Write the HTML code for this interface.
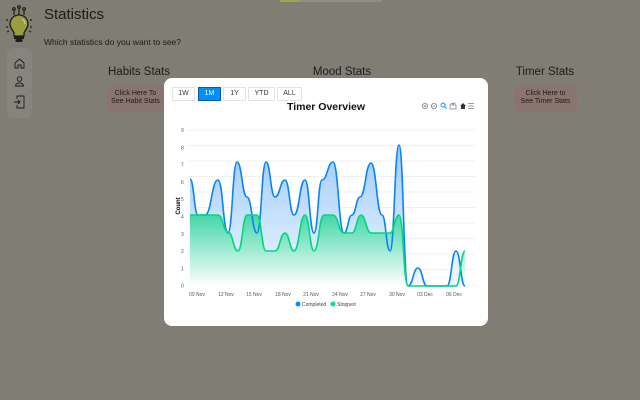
<!DOCTYPE html>
<html><head><meta charset="utf-8"><style>
*{margin:0;padding:0;box-sizing:border-box}
body{width:640px;height:400px;overflow:hidden;background:#7f7d74;font-family:"Liberation Sans",sans-serif;position:relative;color:#1c1c18}
.abs{position:absolute}
.h1{left:44px;top:6px;font-size:15px}
.q{left:44px;top:37px;font-size:8.5px}
.st{font-size:11.5px;text-align:center;width:120px}
.btn{background:#8a7470;border-radius:6px;font-size:7px;text-align:center;line-height:8px;padding-top:5px;color:#1c1c18}
.side{left:7px;top:48px;width:25px;height:70px;background:#86847c;border-radius:6px}
.modal{left:164px;top:78px;width:324px;height:248px;background:#fff;border-radius:8px}
.rb{top:9px;height:14px;border:1px solid #e3e3e3;background:#fff;font-size:7px;text-align:center;line-height:12px;color:#333}
</style></head><body>
<div class="abs" style="left:280px;top:0;width:20px;height:2px;background:#95a84a"></div>
<div class="abs" style="left:300px;top:0;width:82px;height:2px;background:#8f8e86"></div>
<svg class="abs" style="left:4px;top:3px" width="30" height="42" viewBox="0 0 30 42">
<g stroke="#1c1c18" stroke-width="1.2" fill="none"><path d="M10 12V7M15 12V5M20 12V7"/><circle cx="10" cy="6" r="1.3"/><circle cx="15" cy="4" r="1.3"/><circle cx="20" cy="6" r="1.3"/>
<path d="M2 17h2M2 24h2M26 17h2M26 24h2M3 29l2-1M27 29l-2-1"/></g>
<path d="M15 12c-6 0-9 5-9 9 0 4 3 6 4 9v3h10v-3c1-3 4-5 4-9 0-4-3-9-9-9z" fill="#9b9c3e" stroke="#1c1c18" stroke-width="1.3"/>
<path d="M18 16c2 1 3 3 3 5" stroke="#c9c98a" stroke-width="1.3" fill="none"/>
<rect x="10" y="33" width="10" height="3" fill="#1c1c18"/><rect x="11.5" y="36" width="7" height="3" rx="1" fill="#1c1c18"/>
</svg>
<div class="abs h1">Statistics</div>
<div class="abs q">Which statistics do you want to see?</div>
<div class="abs side"></div>
<svg class="abs" style="left:7px;top:48px" width="25" height="70" fill="none" stroke="#1c1c18" stroke-width="0.9">
<path d="M8 15l4.5-4 4.5 4v5h-3v-3h-3v3H8z"/>
<circle cx="12.5" cy="31" r="2.3"/><path d="M8.5 38c0-2 2-3 4-3s4 1 4 3z"/>
<path d="M10 51v-3h7v12h-7v-3M7 54h6M11 52l2 2-2 2"/>
</svg>
<div class="abs st" style="left:79px;top:66px">Habits Stats</div>
<div class="abs btn" style="left:107px;top:85px;width:57px;height:27px">Click Here To<br>See Habit Stats</div>
<div class="abs st" style="left:282px;top:66px">Mood Stats</div>
<div class="abs st" style="left:485px;top:66px">Timer Stats</div>
<div class="abs btn" style="left:514px;top:85px;width:63px;height:27px">Click Here to<br>See Timer Stats</div>
<div class="abs modal">
<div class="abs rb" style="left:8px;width:23px">1W</div>
<div class="abs rb" style="left:34px;width:23px;background:#008ffb;border-color:#0b5ca8;color:#fff">1M</div>
<div class="abs rb" style="left:59px;width:23px">1Y</div>
<div class="abs rb" style="left:84px;width:27px">YTD</div>
<div class="abs rb" style="left:113px;width:25px">ALL</div>
<div class="abs" style="left:0;width:324px;top:23px;text-align:center;font-size:10.5px;font-weight:bold;color:#111">Timer Overview</div>
</div>
<svg class="abs" style="left:0;top:0" width="640" height="400">
<defs>
<linearGradient id="gb" x1="0" y1="0" x2="0" y2="1"><stop offset="0" stop-color="#8cc2f7"/><stop offset="1" stop-color="#eef6fe"/></linearGradient>
<linearGradient id="gg" x1="0" y1="0" x2="0" y2="1"><stop offset="0" stop-color="#3dd6a3"/><stop offset="1" stop-color="#ffffff"/></linearGradient>
</defs>
<g id="grid" stroke="#ececec" stroke-width="0.8"></g>
<g font-size="5" fill="#555" id="yl"></g>
<path id="fb" fill="url(#gb)" fill-opacity="0.85"/>
<path id="fg" fill="url(#gg)" fill-opacity="0.95"/>
<path id="lb" fill="none" stroke="#0a84f5" stroke-width="1.6"/>
<path id="lg" fill="none" stroke="#00d97e" stroke-width="1.6"/>
<g font-size="5" fill="#555" text-anchor="middle">
<text x="197" y="296">09 Nov</text><text x="226" y="296">12 Nov</text><text x="254" y="296">15 Nov</text><text x="283" y="296">18 Nov</text><text x="311" y="296">21 Nov</text><text x="340" y="296">24 Nov</text><text x="368" y="296">27 Nov</text><text x="397" y="296">30 Nov</text><text x="425" y="296">03 Dec</text><text x="454" y="296">06 Dec</text>
</g>
<text x="180" y="206" font-size="6" font-weight="bold" transform="rotate(-90 180 206)" text-anchor="middle">Count</text>
<circle cx="298" cy="304" r="2.5" fill="#008ffb"/><text x="302" y="306" font-size="5" fill="#444">Completed</text>
<circle cx="333" cy="304" r="2.5" fill="#00e396"/><text x="337" y="306" font-size="5" fill="#444">Stopped</text>
<g fill="none" stroke="#6e8192" stroke-width="0.8"><circle cx="425" cy="106" r="2.6"/><circle cx="434" cy="106" r="2.6"/><path d="M432.5 106h3"/><path d="M423.7 106h2.6M425 104.7v2.6"/><path d="M468 103.5h6M468 106h6M468 108.5h6"/></g>
<g fill="none" stroke="#008ffb" stroke-width="0.9"><circle cx="443" cy="105" r="2"/><path d="M444.5 106.5l2 2"/></g>
<path d="M450 109v-4h1v-1.5h1.5v1.5h1v-2h1.5v2h1v4z" fill="none" stroke="#6e8192" stroke-width="0.7"/>
<path d="M460 106l3-3 3 3h-1v3h-4v-3z" fill="#333"/>
</svg>
<script>
var ns="http://www.w3.org/2000/svg";
var g=document.getElementById('grid');
for(var i=0;i<11;i++){var y=130+15.5*i;var l=document.createElementNS(ns,'line');l.setAttribute('x1',188);l.setAttribute('x2',475);l.setAttribute('y1',y);l.setAttribute('y2',y);g.appendChild(l);}
var yl=document.getElementById('yl');
for(var i=0;i<10;i++){var t=document.createElementNS(ns,'text');t.setAttribute('x',181);t.setAttribute('y',132+17.3*i);t.textContent=9-i;yl.appendChild(t);}
function sm(p){var d='M'+p[0][0]+' '+p[0][1];for(var i=0;i<p.length-1;i++){var a=p[i],b=p[i+1],m=(b[0]-a[0])*0.5;
d+=' C'+(a[0]+m)+' '+a[1]+' '+(b[0]-m)+' '+b[1]+' '+b[0]+' '+b[1];}return d;}
var B=[[190,179],[198,215],[205,215],[218,180],[228,233],[237,162],[247,197],[257,233],[266,162],[275,197],[285,180],[294,215],[305,180],[314,233],[322,180],[333,162],[344,233],[352,215],[360,197],[371,163],[382,215],[390,251],[399,145],[408,286],[418,268],[427,286],[447,286],[456,251],[465,286]];
var G=[[190,215],[218,215],[228,232],[238,251],[247,215],[257,215],[266,251],[275,251],[285,233],[294,251],[305,215],[314,251],[324,215],[333,215],[344,233],[352,233],[361,215],[371,233],[390,233],[399,215],[408,286],[456,286],[465,251]];
var db=sm(B),dg=sm(G);
document.getElementById('lb').setAttribute('d',db);
document.getElementById('lg').setAttribute('d',dg);
document.getElementById('fb').setAttribute('d',db+' L465 286 L190 286Z');
document.getElementById('fg').setAttribute('d',dg+' L465 286 L190 286Z');
</script>
</body></html>
